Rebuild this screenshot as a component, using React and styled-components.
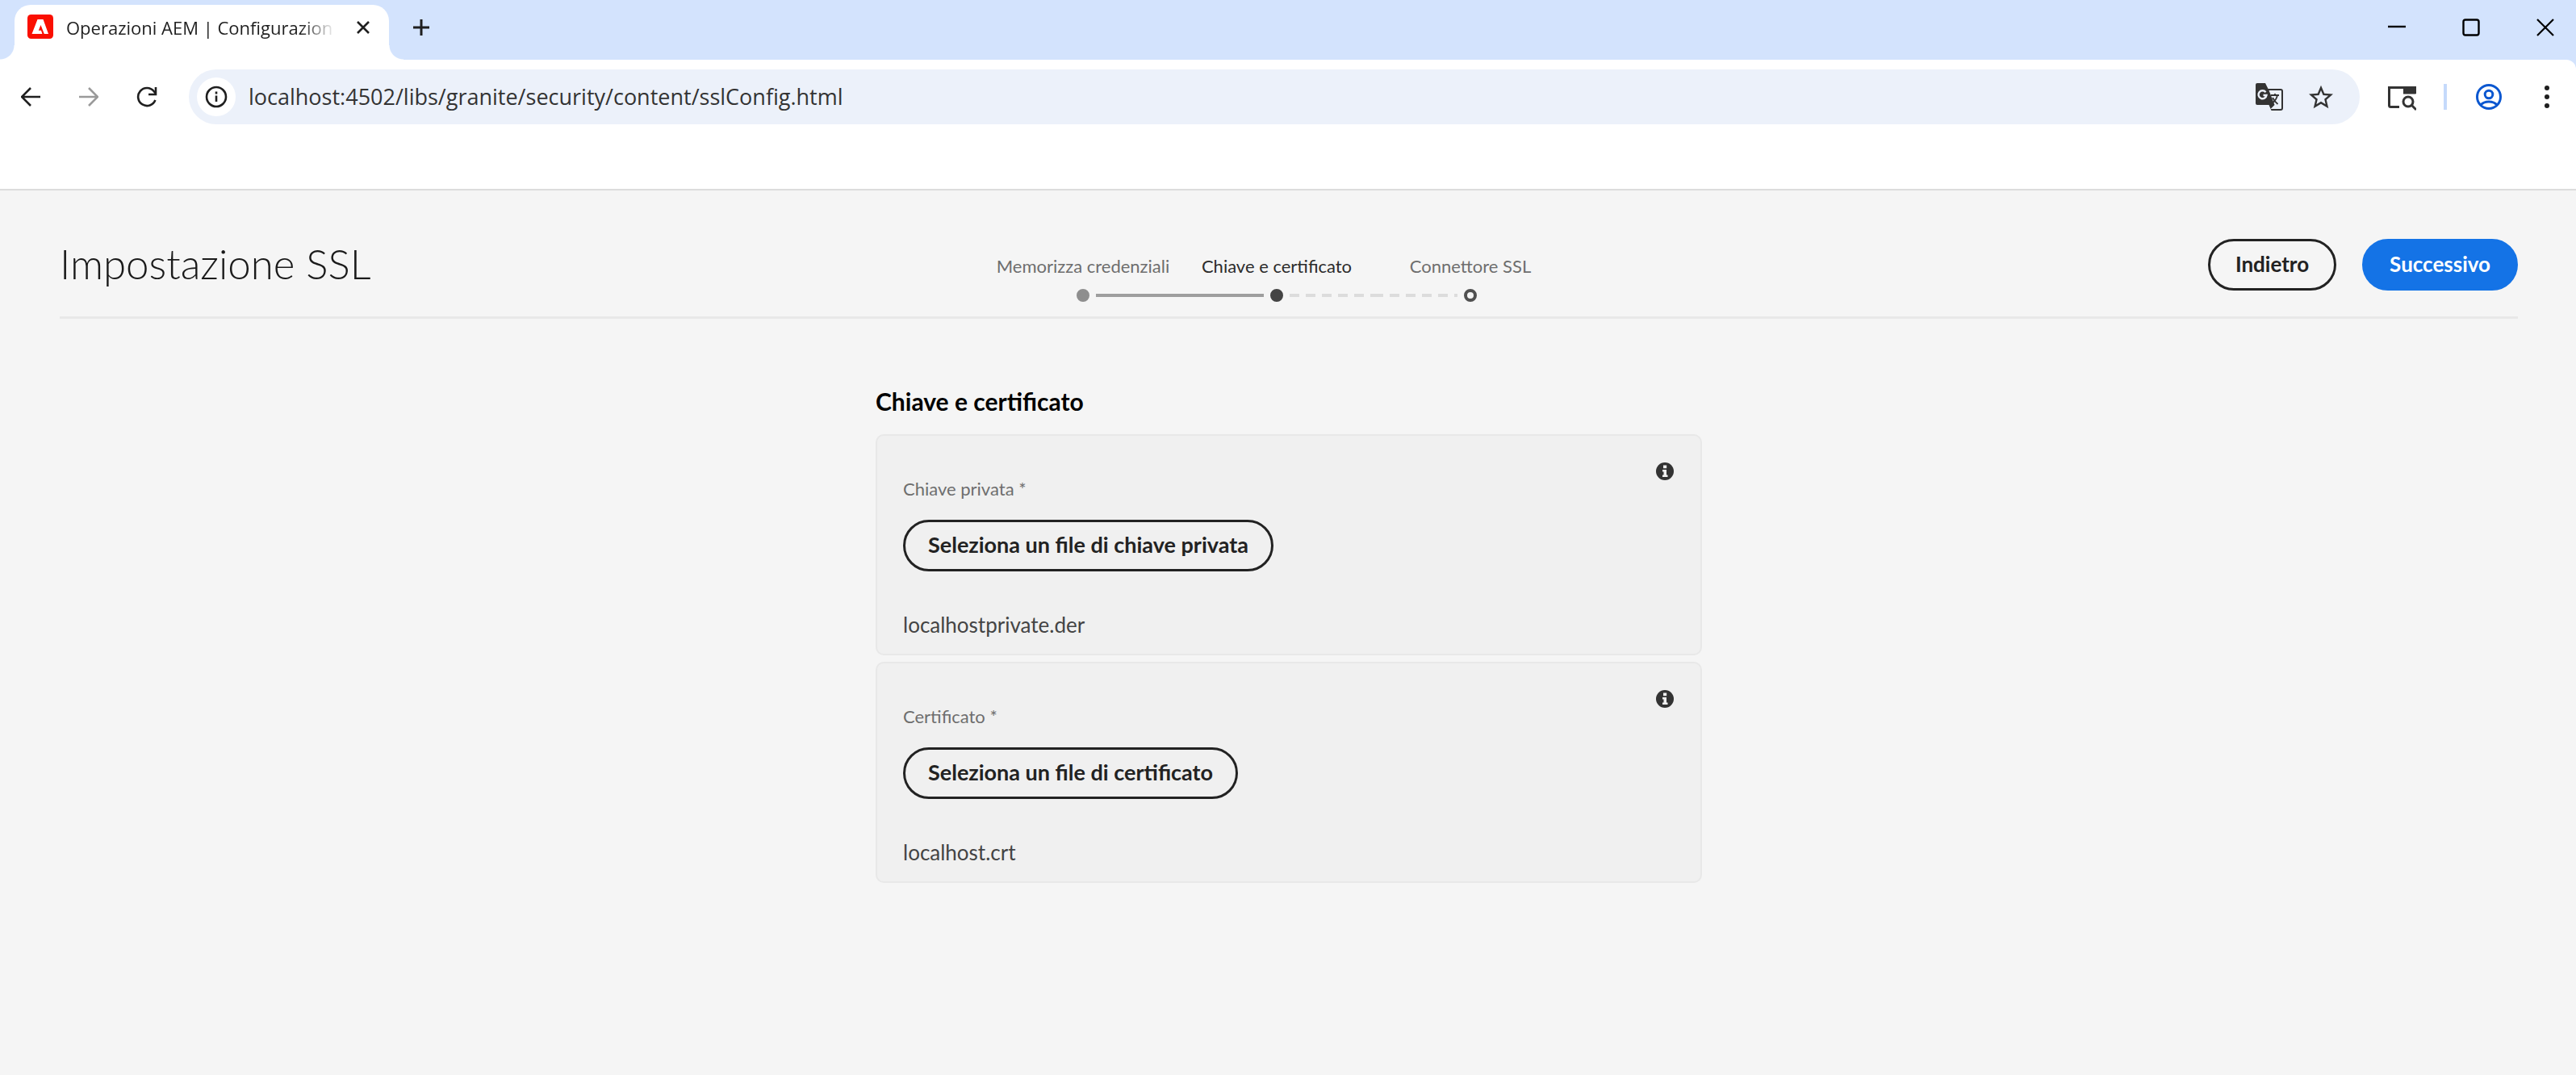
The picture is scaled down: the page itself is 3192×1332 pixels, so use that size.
import React from "react";
import styled, { createGlobalStyle } from "styled-components";

const GlobalStyle = createGlobalStyle`
  *, *::before, *::after { box-sizing: border-box; }
  body { margin: 0; background: #f5f5f5; }
  button, input { font: inherit; color: inherit; }
`;

const chromeFont = `"Open Sans", "Noto Sans", sans-serif`;
const pageFont = `Lato, "Open Sans", sans-serif`;

/* ---------- browser frame ---------- */

const Window = styled.div`
  min-height: 100vh;
  display: flex;
  flex-direction: column;
`;

const TabStrip = styled.div`
  height: 74px;
  padding: 6px 0 0 18px;
  display: flex;
  background: #d3e3fd;
  font-family: ${chromeFont};
`;

const Tab = styled.div`
  position: relative;
  width: 464px;
  padding: 0 14px 12px 16px;
  display: flex;
  align-items: center;
  gap: 16px;
  background: #fff;
  border-radius: 20px 20px 0 0;

  &::before,
  &::after {
    content: "";
    position: absolute;
    bottom: 0;
    width: 18px;
    height: 18px;
  }
  &::before {
    right: 100%;
    background: radial-gradient(circle at 0 0, transparent 17px, #fff 18px);
  }
  &::after {
    left: 100%;
    background: radial-gradient(circle at 100% 0, transparent 17px, #fff 18px);
  }
`;

const TabTitle = styled.span`
  flex: 1;
  min-width: 0;
  overflow: hidden;
  white-space: nowrap;
  font-size: 22px;
  line-height: 32px;
  color: #1f1f1f;
  mask-image: linear-gradient(90deg, #000 calc(100% - 44px), transparent);
`;

const PlainButton = styled.button`
  flex: none;
  display: grid;
  place-items: center;
  width: ${(p) => p.$width || 48}px;
  height: ${(p) => p.$height || 48}px;
  padding: 0;
  border: 0;
  border-radius: ${(p) => (p.$round ? "50%" : "0")};
  background: ${(p) => p.$fill || "transparent"};
  color: ${(p) => p.$color || "#1f1f1f"};
  cursor: pointer;

  svg { display: block; }
`;

const NewTab = styled(PlainButton)`
  margin: 4px 0 0 16px;
`;

const WindowControls = styled.div`
  margin-left: auto;
  display: flex;
  gap: 16px;
`;

const Toolbar = styled.div`
  height: 92px;
  padding: 0 12px 0 14px;
  display: flex;
  align-items: center;
  gap: 24px;
  background: #fff;
  border-top-right-radius: 12px;
`;

const ToolbarBack = styled.div`
  background: linear-gradient(#d3e3fd 0 12px, #fff 12px);
`;

const ToolGroup = styled.div`
  display: flex;
  align-items: center;
  gap: ${(p) => p.$gap}px;
`;

const AddressBar = styled.div`
  flex: 1;
  height: 68px;
  margin: 0 4px;
  padding: 0 24px 0 10px;
  display: flex;
  align-items: center;
  gap: 16px;
  background: #ecf1fa;
  border-radius: 34px;
`;

const Address = styled.input`
  flex: 1;
  min-width: 0;
  padding: 0;
  border: 0;
  outline: 0;
  background: transparent;
  font-family: ${chromeFont};
  font-size: 27px;
  line-height: 36px;
  color: #333;
`;

const Divider = styled.span`
  width: 4px;
  height: 32px;
  background: #c5dafb;
`;

const BookmarkSpace = styled.div`
  height: 70px;
  background: #fff;
  border-bottom: 2px solid #dcdcdc;
`;

/* ---------- wizard page ---------- */

const Page = styled.main`
  flex: 1;
  padding: 0 72px 0 74px;
  background: #f5f5f5;
  font-family: ${pageFont};
  color: #2c2c2c;
`;

const WizardHeader = styled.header`
  display: grid;
  grid-template-columns: 1fr auto 1fr;
  align-items: start;
  padding: 60px 0 18px;
  border-bottom: 3px solid #e8e8e8;
`;

const Title = styled.h1`
  margin: 0;
  font-size: 51px;
  font-weight: 300;
  line-height: 62px;
  color: #1a1a1a;
`;

const Steps = styled.ol`
  display: flex;
  margin: 0 30px 0 0;
  padding: 20px 0 0;
  list-style: none;
`;

const Step = styled.li`
  width: 240px;
  display: flex;
  flex-direction: column;
  align-items: center;
  gap: 14px;
  font-size: 22px;
  line-height: 28px;
  white-space: nowrap;
  color: ${(p) => (p.$current ? "#2c2c2c" : "#6e6e6e")};
`;

const StepTrack = styled.div`
  align-self: stretch;
  display: flex;
  align-items: center;
  gap: 8px;
`;

const dotFill = { done: "#8e8e8e", current: "#444", next: "#f5f5f5" };
const dotEdge = { done: "#8e8e8e", current: "#444", next: "#505050" };

const Dot = styled.span`
  flex: none;
  width: 16px;
  height: 16px;
  border-radius: 50%;
  border: 4px solid ${(p) => dotEdge[p.$state]};
  background: ${(p) => dotFill[p.$state]};
`;

const segmentFill = {
  none: "transparent",
  solid: "#9e9e9e",
  dashed: "repeating-linear-gradient(90deg, #dcdcdc 0 12px, transparent 12px 20px)",
};

const Segment = styled.span`
  flex: 1;
  height: 4px;
  background: ${(p) => segmentFill[p.$kind]};
`;

const Actions = styled.div`
  justify-self: end;
  display: flex;
  gap: 32px;
`;

const PillButton = styled.button`
  height: 64px;
  padding: ${(p) => (p.$wide ? "0 28px 3px" : "0 31px 3px")};
  border: 3px solid ${(p) => (p.$primary ? "#1473e6" : "#222")};
  border-radius: 32px;
  background: ${(p) => (p.$primary ? "#1473e6" : "transparent")};
  color: ${(p) => (p.$primary ? "#fff" : "#222")};
  font-family: ${pageFont};
  font-size: ${(p) => (p.$wide ? 27 : 26)}px;
  font-weight: 700;
  line-height: 32px;
  white-space: nowrap;
  cursor: pointer;
`;

const Form = styled.section`
  width: 1024px;
  max-width: 100%;
  margin: 82px auto 0;
  display: flex;
  flex-direction: column;
  gap: 8px;
`;

const FormTitle = styled.h2`
  margin: 0 0 13px;
  font-size: 30px;
  font-weight: 700;
  line-height: 40px;
  color: #000;
`;

const Card = styled.div`
  display: flex;
  align-items: flex-start;
  padding: 32px 32px 20px;
  border: 2px solid #e8e8e8;
  border-radius: 10px;
  background: #f0f0f0;
`;

const Field = styled.div`
  flex: 1;
  padding-top: 20px;
  display: flex;
  flex-direction: column;
  align-items: flex-start;
`;

const FieldLabel = styled.label`
  margin-bottom: 24px;
  font-size: 22px;
  line-height: 28px;
  color: #6e6e6e;
`;

const FileName = styled.output`
  margin-top: 50px;
  font-size: 26px;
  line-height: 32px;
  color: #444;
`;

/* ---------- icons ---------- */

const Svg = ({ size = 24, box = 24, children, ...rest }) => (
  <svg
    width={size}
    height={size}
    viewBox={`0 0 ${box} ${box}`}
    fill="none"
    stroke="currentColor"
    strokeWidth="2"
    aria-hidden="true"
    {...rest}
  >
    {children}
  </svg>
);

const AdobeIcon = () => (
  <Svg size={32} box={32} stroke="none">
    <rect x="0" y="0" width="32" height="30" rx="4.5" fill="#fa0f00" />
    <path d="M12.5 6h7L26 24h-5.200L16.500 13l-2.700 6.800h3.200l1.400 4.200H5.500z" fill="#fff" />
  </Svg>
);

const CloseTabIcon = () => (
  <Svg size={16} box={16} strokeWidth="2.6"><path d="M1 1l14 14M15 1L1 15" /></Svg>
);
const PlusIcon = () => (
  <Svg size={22} box={22} strokeWidth="3"><path d="M11 1v20M1 11h20" /></Svg>
);
const MinimizeIcon = () => (
  <Svg size={22} box={22} strokeWidth="2.4" stroke="#000"><path d="M0 10h22" /></Svg>
);
const MaximizeIcon = () => (
  <Svg size={22} box={22} strokeWidth="2.4" stroke="#000"><rect x="1.5" y="1.5" width="19" height="19" rx="2.5" /></Svg>
);
const CloseIcon = () => (
  <Svg size={22} box={22} strokeWidth="2.2" stroke="#000"><path d="M1 1l20 20M21 1L1 21" /></Svg>
);
const ArrowIcon = ({ flip }) => (
  <Svg size={24} strokeWidth="2.6">
    <path d={flip ? "M0 12h22M12 1l11 11-11 11" : "M24 12H2M12 1L1 12l11 11"} />
  </Svg>
);
const ReloadIcon = () => (
  <Svg size={26} box={26} strokeWidth="2.6">
    <path d="M23.4 17A11 11 0 1 1 21.6 6L24 9" />
    <path d="M24 1v9h-9" />
  </Svg>
);
const SiteInfoIcon = () => (
  <Svg size={28} box={28} strokeWidth="2.6">
    <circle cx="14" cy="14" r="12" />
    <path d="M14 12.5v7.5M14 7.5v3" />
  </Svg>
);
const TranslateIcon = () => (
  <Svg size={34} box={34} stroke="none">
    <path d="M2 0h10l3.5 7H31a3 3 0 0 1 3 3v21a3 3 0 0 1-3 3H19.500l-3-7H2a2 2 0 0 1-2-2V2a2 2 0 0 1 2-2z" fill="#333" />
    <path d="M16.5 9H31a1 1 0 0 1 1 1v21a1 1 0 0 1-1 1H18.500l5-5z" fill="#ecf1fa" />
    <path d="M12.500 11.200A5 5 0 1 0 13.500 15H9.500" fill="none" stroke="#ecf1fa" strokeWidth="2.4" />
    <path d="M19 15h10M24 13v2M27 15c-1 5-4 8-7 10M21 18c2 4 4 6 6.500 8" fill="none" stroke="#333" strokeWidth="1.8" />
  </Svg>
);
const StarIcon = () => (
  <Svg size={36} fill="currentColor" stroke="none">
    <path d="M22 9.740l-7.190-.620L12 2.500 9.190 9.130 2 9.740l5.460 4.730L5.820 21.500 12 17.770l6.180 3.730-1.630-7.030L22 9.740zM12 15.900l-3.760 2.270 1-4.280-3.320-2.880 4.380-.380L12 6.600l1.710 4.040 4.380.380-3.320 2.880 1 4.280L12 15.900z" />
  </Svg>
);
const TabSearchIcon = () => (
  <Svg size={36} box={36} strokeWidth="3">
    <path d="M15 30.500H4.500a2 2 0 0 1-2-2V6.500h32V14" />
    <path d="M20 5h15.500v9.500H20z" fill="currentColor" stroke="none" />
    <circle cx="26" cy="24" r="6" />
    <path d="M30 28l6 6" />
  </Svg>
);
const ProfileIcon = () => (
  <Svg size={34} box={34} strokeWidth="3">
    <circle cx="17" cy="17" r="14.5" />
    <circle cx="17" cy="14" r="4.8" />
    <path d="M7 27c2.500-2.800 6-4 10-4s7.500 1.200 10 4" />
  </Svg>
);
const MenuIcon = () => (
  <Svg size={32} box={32} fill="currentColor" stroke="none">
    <circle cx="16" cy="5" r="3" /><circle cx="16" cy="16" r="3" /><circle cx="16" cy="27" r="3" />
  </Svg>
);
const InfoIcon = () => (
  <Svg size={24} stroke="none">
    <circle cx="12" cy="12" r="11" fill="#333" />
    <path d="M10 4.500h4.200v3.800H10zM9 10h5v6.500h1.500V19H9v-2.500h1.500v-4H9z" fill="#f0f0f0" />
  </Svg>
);

/* ---------- content ---------- */

const steps = [
  { label: "Memorizza credenziali", state: "done", before: "none", after: "solid" },
  { label: "Chiave e certificato", state: "current", before: "solid", after: "dashed" },
  { label: "Connettore SSL", state: "next", before: "dashed", after: "none" },
];

const fields = [
  { id: "chiave", label: "Chiave privata *", action: "Seleziona un file di chiave privata", file: "localhostprivate.der" },
  { id: "certificato", label: "Certificato *", action: "Seleziona un file di certificato", file: "localhost.crt" },
];

export default function App() {
  return (
    <Window>
      <GlobalStyle />
      <TabStrip>
        <Tab>
          <AdobeIcon />
          <TabTitle>Operazioni AEM | Configurazion</TabTitle>
          <PlainButton $width={36} $height={36} aria-label="Chiudi scheda"><CloseTabIcon /></PlainButton>
        </Tab>
        <NewTab aria-label="Nuova scheda"><PlusIcon /></NewTab>
        <WindowControls>
          <PlainButton $width={76} $height={56} aria-label="Riduci a icona"><MinimizeIcon /></PlainButton>
          <PlainButton $width={76} $height={56} aria-label="Ingrandisci"><MaximizeIcon /></PlainButton>
          <PlainButton $width={76} $height={56} aria-label="Chiudi"><CloseIcon /></PlainButton>
        </WindowControls>
      </TabStrip>

      <ToolbarBack>
        <Toolbar>
          <ToolGroup $gap={24}>
            <PlainButton aria-label="Indietro nella cronologia"><ArrowIcon /></PlainButton>
            <PlainButton $color="#9a9a9a" aria-label="Avanti nella cronologia"><ArrowIcon flip /></PlainButton>
            <PlainButton aria-label="Ricarica"><ReloadIcon /></PlainButton>
          </ToolGroup>
          <AddressBar>
            <PlainButton $round $fill="#fff" aria-label="Informazioni sul sito"><SiteInfoIcon /></PlainButton>
            <Address aria-label="Indirizzo" defaultValue="localhost:4502/libs/granite/security/content/sslConfig.html" />
            <PlainButton aria-label="Traduci"><TranslateIcon /></PlainButton>
            <PlainButton $color="#333" aria-label="Aggiungi ai preferiti"><StarIcon /></PlainButton>
          </AddressBar>
          <ToolGroup $gap={28}>
            <PlainButton $color="#333" aria-label="Cerca schede"><TabSearchIcon /></PlainButton>
            <Divider />
            <PlainButton $color="#0b57d0" aria-label="Profilo"><ProfileIcon /></PlainButton>
          </ToolGroup>
          <PlainButton aria-label="Menu"><MenuIcon /></PlainButton>
        </Toolbar>
      </ToolbarBack>
      <BookmarkSpace />

      <Page>
        <WizardHeader>
          <Title>Impostazione SSL</Title>
          <Steps>
            {steps.map((s) => (
              <Step key={s.label} $current={s.state === "current"}>
                {s.label}
                <StepTrack>
                  <Segment $kind={s.before} />
                  <Dot $state={s.state} />
                  <Segment $kind={s.after} />
                </StepTrack>
              </Step>
            ))}
          </Steps>
          <Actions>
            <PillButton>Indietro</PillButton>
            <PillButton $primary>Successivo</PillButton>
          </Actions>
        </WizardHeader>

        <Form>
          <FormTitle>Chiave e certificato</FormTitle>
          {fields.map((f) => (
            <Card key={f.id}>
              <Field>
                <FieldLabel htmlFor={f.id}>{f.label}</FieldLabel>
                <PillButton $wide id={f.id} type="button">{f.action}</PillButton>
                <FileName htmlFor={f.id}>{f.file}</FileName>
              </Field>
              <PlainButton $width={24} $height={24} aria-label={`Informazioni: ${f.label}`}><InfoIcon /></PlainButton>
            </Card>
          ))}
        </Form>
      </Page>
    </Window>
  );
}
